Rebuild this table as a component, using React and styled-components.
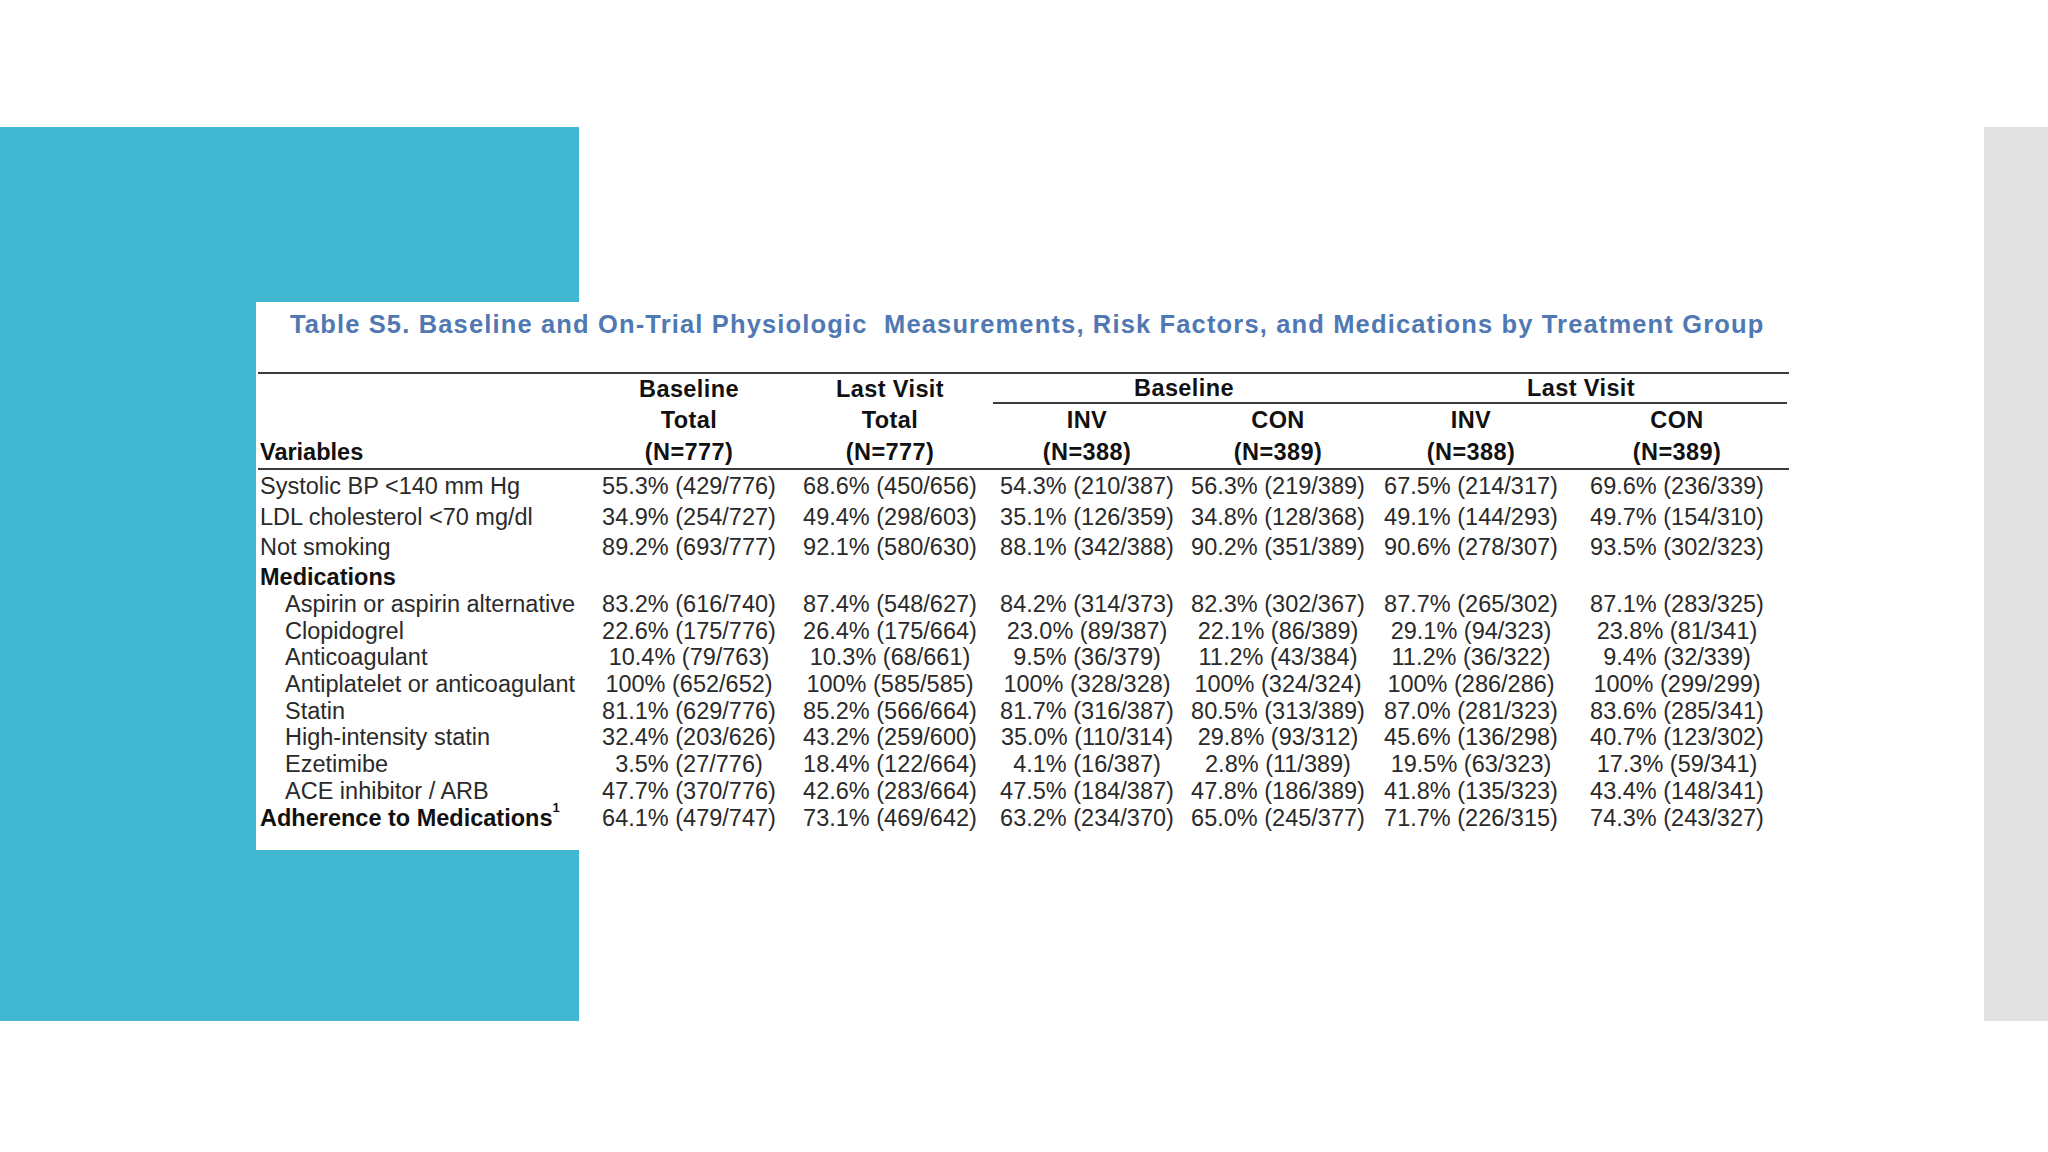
import React from 'react';
import styled, { createGlobalStyle } from 'styled-components';

const GlobalStyle = createGlobalStyle`
  html, body {
    margin: 0;
    padding: 0;
    background: #fff;
  }
  body {
    font-family: 'Liberation Sans', Arial, sans-serif;
  }
`;

const COLS = '333px 196px 206px 188px 194px 192px 220px';

const rows = [
  { label: 'Systolic BP <140 mm Hg', h: 32, vals: ['55.3% (429/776)', '68.6% (450/656)', '54.3% (210/387)', '56.3% (219/389)', '67.5% (214/317)', '69.6% (236/339)'] },
  { label: 'LDL cholesterol <70 mg/dl', h: 30, vals: ['34.9% (254/727)', '49.4% (298/603)', '35.1% (126/359)', '34.8% (128/368)', '49.1% (144/293)', '49.7% (154/310)'] },
  { label: 'Not smoking', h: 31, vals: ['89.2% (693/777)', '92.1% (580/630)', '88.1% (342/388)', '90.2% (351/389)', '90.6% (278/307)', '93.5% (302/323)'] },
  { label: 'Medications', h: 28, bold: true, vals: [] },
  { label: 'Aspirin or aspirin alternative', h: 26.7, indent: true, vals: ['83.2% (616/740)', '87.4% (548/627)', '84.2% (314/373)', '82.3% (302/367)', '87.7% (265/302)', '87.1% (283/325)'] },
  { label: 'Clopidogrel', h: 26.7, indent: true, vals: ['22.6% (175/776)', '26.4% (175/664)', '23.0% (89/387)', '22.1% (86/389)', '29.1% (94/323)', '23.8% (81/341)'] },
  { label: 'Anticoagulant', h: 26.7, indent: true, vals: ['10.4% (79/763)', '10.3% (68/661)', '9.5% (36/379)', '11.2% (43/384)', '11.2% (36/322)', '9.4% (32/339)'] },
  { label: 'Antiplatelet or anticoagulant', h: 26.7, indent: true, vals: ['100% (652/652)', '100% (585/585)', '100% (328/328)', '100% (324/324)', '100% (286/286)', '100% (299/299)'] },
  { label: 'Statin', h: 26.7, indent: true, vals: ['81.1% (629/776)', '85.2% (566/664)', '81.7% (316/387)', '80.5% (313/389)', '87.0% (281/323)', '83.6% (285/341)'] },
  { label: 'High-intensity statin', h: 26.7, indent: true, vals: ['32.4% (203/626)', '43.2% (259/600)', '35.0% (110/314)', '29.8% (93/312)', '45.6% (136/298)', '40.7% (123/302)'] },
  { label: 'Ezetimibe', h: 26.7, indent: true, vals: ['3.5% (27/776)', '18.4% (122/664)', '4.1% (16/387)', '2.8% (11/389)', '19.5% (63/323)', '17.3% (59/341)'] },
  { label: 'ACE inhibitor / ARB', h: 26.7, indent: true, vals: ['47.7% (370/776)', '42.6% (283/664)', '47.5% (184/387)', '47.8% (186/389)', '41.8% (135/323)', '43.4% (148/341)'] },
  { label: 'Adherence to Medications', sup: '1', h: 26.7, bold: true, vals: ['64.1% (479/747)', '73.1% (469/642)', '63.2% (234/370)', '65.0% (245/377)', '71.7% (226/315)', '74.3% (243/327)'] },
];

const App = () => {
  return (
    <>
      <GlobalStyle />
      <Slide>
        <AccentBlock />
        <SideStrip />
        <Card>
          <Title>
            Table S5. Baseline and On-Trial Physiologic&nbsp; Measurements, Risk Factors, and Medications by Treatment Group
          </Title>
          <Table>
            <Row $h={32} $top>
              <Cell />
              <HeadCell>Baseline</HeadCell>
              <HeadCell>Last Visit</HeadCell>
              <GroupCell>Baseline</GroupCell>
              <GroupCell>Last Visit</GroupCell>
            </Row>
            <Row $h={32}>
              <Cell />
              <HeadCell>Total</HeadCell>
              <HeadCell>Total</HeadCell>
              <HeadCell>INV</HeadCell>
              <HeadCell>CON</HeadCell>
              <HeadCell>INV</HeadCell>
              <HeadCell>CON</HeadCell>
            </Row>
            <Row $h={34} $bottom>
              <Label $bold>Variables</Label>
              <HeadCell>(N=777)</HeadCell>
              <HeadCell>(N=777)</HeadCell>
              <HeadCell>(N=388)</HeadCell>
              <HeadCell>(N=389)</HeadCell>
              <HeadCell>(N=388)</HeadCell>
              <HeadCell>(N=389)</HeadCell>
            </Row>
            {rows.map((r) => (
              <Row key={r.label} $h={r.h}>
                <Label $bold={r.bold} $indent={r.indent}>
                  {r.label}
                  {r.sup && <Sup>{r.sup}</Sup>}
                </Label>
                {r.vals.map((v, i) => (
                  <Cell key={i}>{v}</Cell>
                ))}
              </Row>
            ))}
          </Table>
        </Card>
      </Slide>
    </>
  );
};

const Slide = styled.div`
  width: 2048px;
  height: 1152px;
  display: grid;
  grid-template-columns: 256px 323px 1210px 195px 64px;
  grid-template-rows: 127px 175px 548px 171px 131px;
  background: #fff;
  overflow: hidden;
`;

const AccentBlock = styled.div`
  grid-column: 1 / 3;
  grid-row: 2 / 5;
  background: #42b7d1;
`;

const SideStrip = styled.div`
  grid-column: 5;
  grid-row: 2 / 5;
  background: #e1e1e1;
`;

const Card = styled.div`
  grid-column: 2 / 4;
  grid-row: 3;
  background: #fff;
  z-index: 1;
  display: flex;
  flex-direction: column;
`;

const Title = styled.div`
  padding: 7px 0 0 34px;
  font-size: 25.5px;
  line-height: 30px;
  letter-spacing: 1.15px;
  font-weight: 700;
  color: #5078b3;
  white-space: nowrap;
`;

const Table = styled.div`
  margin: 33px 0 0 2px;
  display: flex;
  flex-direction: column;
  color: #2a2a2a;
`;

const Row = styled.div`
  display: grid;
  grid-template-columns: ${COLS};
  height: ${(p) => p.$h}px;
  box-sizing: border-box;
  border-top: ${(p) => (p.$top ? '2px solid #3c3c3c' : 'none')};
  border-bottom: ${(p) => (p.$bottom ? '2px solid #3c3c3c' : 'none')};
`;

const Cell = styled.div`
  display: flex;
  align-items: center;
  justify-content: center;
  font-size: 23.5px;
  white-space: nowrap;
`;

const HeadCell = styled(Cell)`
  font-weight: 700;
  letter-spacing: 0.4px;
  color: #111;
`;

const GroupCell = styled(HeadCell)`
  grid-column: span 2;
  box-sizing: border-box;
  border-bottom: 2px solid #3c3c3c;
`;

const Label = styled.div`
  display: flex;
  align-items: center;
  padding-left: ${(p) => (p.$indent ? '27px' : '2px')};
  font-size: 23.5px;
  white-space: nowrap;
  font-weight: ${(p) => (p.$bold ? 700 : 400)};
  color: ${(p) => (p.$bold ? '#111' : '#2a2a2a')};
`;

const Sup = styled.sup`
  font-size: 13px;
  line-height: 0;
  align-self: flex-start;
  margin-top: 3px;
`;

export default App;
